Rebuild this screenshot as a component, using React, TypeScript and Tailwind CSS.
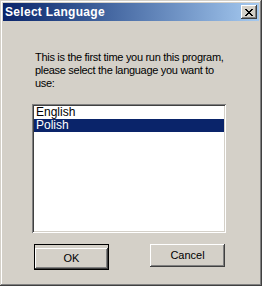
import { useState } from "react";

const raised =
  "shadow-[inset_-1px_-1px_0_#404040,inset_1px_1px_0_#ffffff,inset_-2px_-2px_0_#808080,inset_2px_2px_0_#d4d0c8]";

export default function App() {
  const [selected, setSelected] = useState("Polish");
  const languages = ["English", "Polish"];

  return (
    <div
      className="w-[262px] h-[286px] bg-[#d4d0c8] p-[3px] flex flex-col text-black shadow-[inset_-1px_-1px_0_#404040,inset_1px_1px_0_#d4d0c8,inset_-2px_-2px_0_#808080,inset_2px_2px_0_#ffffff]"
      style={{ fontFamily: "'Liberation Sans', Arial, sans-serif" }}
    >
      {/* title bar */}
      <div className="h-[18px] flex items-center justify-between pl-[2px] pr-[2px] bg-gradient-to-r from-[#0a246a] to-[#a6caf0]">
        <span className="text-white font-bold text-[12px] leading-[18px] tracking-[0.3px]">Select Language</span>
        <button className={"w-[16px] h-[14px] bg-[#d4d0c8] flex items-center justify-center " + raised}>
          <svg width="8" height="7" viewBox="0 0 8 7" shapeRendering="crispEdges">
            <path
              d="M0 0h2v1h-2zM6 0h2v1h-2zM1 1h2v1h-2zM5 1h2v1h-2zM2 2h4v1h-4zM3 3h2v1h-2zM2 4h4v1h-4zM1 5h2v1h-2zM5 5h2v1h-2zM0 6h2v1h-2zM6 6h2v1h-2z"
              fill="#000"
            />
          </svg>
        </button>
      </div>

      {/* body */}
      <div className="flex-1 flex flex-col pl-[29px] pr-[33px]">
        <p className="mt-[30px] ml-[3px] text-[11px] leading-[13px] whitespace-nowrap tracking-[-0.3px]">
          This is the first time you run this program,
          <br />
          please select the language you want to
          <br />
          use:
        </p>

        <div className="mt-[14px] h-[129px] bg-white p-[2px] shadow-[inset_1px_1px_0_#808080,inset_-1px_-1px_0_#ffffff,inset_2px_2px_0_#404040,inset_-2px_-2px_0_#d4d0c8]">
          {languages.map((lang) => (
            <div
              key={lang}
              onClick={() => setSelected(lang)}
              className={
                "h-[13px] pl-[2px] text-[12px] leading-[13px] cursor-default " +
                (selected === lang ? "bg-[#0a246a] text-white" : "text-black")
              }
            >
              {lang}
            </div>
          ))}
        </div>

        <div className="mt-[11px] flex justify-between pl-[2px] pr-[1px]">
          <div className="border border-black">
            <button className={"w-[73px] h-[21px] bg-[#d4d0c8] text-[11px] " + raised}>OK</button>
          </div>
          <button className={"w-[75px] h-[23px] bg-[#d4d0c8] text-[11px] " + raised}>Cancel</button>
        </div>
      </div>
    </div>
  );
}
